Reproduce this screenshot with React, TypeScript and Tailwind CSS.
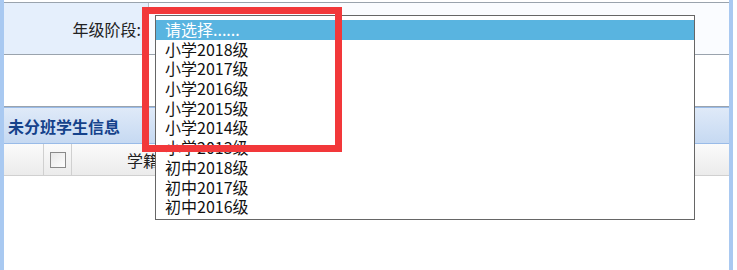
const OPTIONS = [
  "请选择......",
  "小学2018级",
  "小学2017级",
  "小学2016级",
  "小学2015级",
  "小学2014级",
  "小学2013级",
  "初中2018级",
  "初中2017级",
  "初中2016级",
];

const font = { fontFamily: '"Noto Sans CJK SC", "Noto Sans", sans-serif' };

export default function App() {
  return (
    <div className="relative h-[270px] w-[737px] overflow-hidden bg-white" style={font}>
      <div className="flex h-full w-[733px] flex-col border-x-4 border-[#a9c9f1]">
        {/* Query form */}
        <div className="mt-[2px] border-y border-[#9aa3ad] bg-[#fafcff]">
          <div className="flex h-[52px] border-b border-[#9aa3ad]">
            <div className="flex w-[144px] items-center justify-end bg-[#e5effc] pr-[7px] text-[16px] text-[#222]">
              年级阶段:
            </div>
            <div className="flex-1 border-l border-[#b5bec8]" />
          </div>
          <div className="h-[51px] bg-white" />
        </div>

        {/* Panel header */}
        <div className="flex h-[37px] items-center border-y border-[#99bbe8] bg-gradient-to-b from-[#dfeaf8] to-[#c6d9f2] pl-[4px]">
          <span className="text-[16px] font-bold text-[#15428b]">未分班学生信息</span>
        </div>

        {/* Grid header */}
        <div className="flex h-[32px] border-b border-[#d0d0d0] bg-gradient-to-b from-[#fbfbfb] to-[#ebebeb]">
          <div className="w-[40px] border-r border-[#d0d0d0]" />
          <div className="flex w-[28px] items-center justify-center border-r border-[#d0d0d0]">
            <div className="h-[16px] w-[16px] border border-[#8a8a8a] bg-gradient-to-br from-[#e8e8e8] to-[#fdfdfd]" />
          </div>
          <div className="flex flex-1 items-center pl-[55px] text-[16px] text-[#222]">学籍号</div>
        </div>
        <div className="flex-1 bg-white" />
      </div>

      {/* Open select list */}
      <div className="absolute left-[155px] top-[15px] h-[205px] w-[540px] border border-[#666] bg-white pt-[4px]">
        {OPTIONS.map((o, i) => (
          <div
            key={o}
            className={`h-[19.7px] pl-[9px] text-[16px] leading-[19.7px] ${
              i === 0 ? "bg-[#59b4e0] text-white" : "text-[#111]"
            }`}
          >
            {o}
          </div>
        ))}
      </div>

      {/* Red highlight box */}
      <div className="absolute left-[142px] top-[7px] h-[145px] w-[200px] border-[7px] border-[#f2383a]" />
    </div>
  );
}
